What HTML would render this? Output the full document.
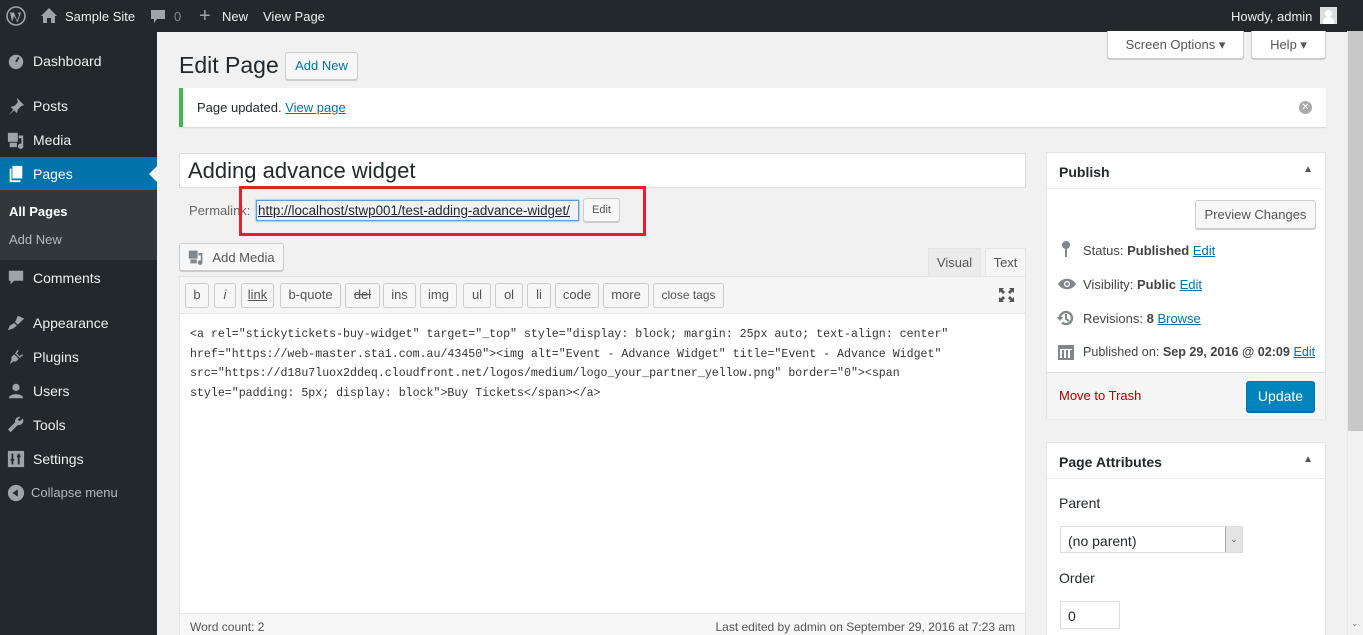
<!DOCTYPE html>
<html style="overflow:hidden;height:635px"><head><meta charset="utf-8"><style>
*{box-sizing:border-box;margin:0;padding:0}
body{width:1363px;height:635px;overflow:hidden;background:#f1f1f1;font-family:"Liberation Sans",sans-serif;font-size:13px;color:#23282d;position:relative}
.a{position:absolute}
#bar{left:0;top:0;width:1363px;height:32px;background:#23282d;color:#eee;font-size:13px}
#bar span{position:absolute;top:9px}
#side{left:0;top:32px;width:157px;height:603px;background:#23282d}
.mi{position:absolute;left:33px;color:#eee;font-size:14px}
.ic{position:absolute;left:7px;width:18px;height:18px;fill:#9ea3a8}
.btn{position:absolute;background:#f7f7f7;border:1px solid #ccc;border-radius:3px;box-shadow:0 1px 0 #ccc;color:#555;text-align:center}
.tb{position:absolute;top:283px;height:25px;background:#f7f7f7;border:1px solid #ccc;border-radius:3px;color:#555;font-size:13px;line-height:22px;text-align:center}
.box{position:absolute;background:#fff;border:1px solid #e5e5e5;box-shadow:0 1px 1px rgba(0,0,0,.04)}
a{color:#0073aa}
.pl{position:absolute;left:36px;font-size:13px;color:#444}
</style></head><body>
<div id="bar" class="a">
<svg class="a" style="left:6px;top:6px" width="20" height="20" viewBox="0 0 20 20"><circle cx="10" cy="10" r="9" fill="none" stroke="#9ea3a8" stroke-width="1.6"/><path d="M4 6.5h4l3 8 2-5-1-3h3l-3.5 10L8 10l-2 6z" fill="#9ea3a8"/></svg>
<svg class="a" style="left:41px;top:8px" width="16" height="15" viewBox="0 0 16 15"><path d="M8 0 0 8h2v7h4v-5h4v5h4V8h2z" fill="#9ea3a8"/></svg>
<span style="left:65px">Sample Site</span>
<svg class="a" style="left:150px;top:9px" width="16" height="16" viewBox="0 0 16 16"><path d="M1 1h14v9H7l-3 4v-4H1z" fill="#9ea3a8"/></svg>
<span style="left:174px;color:#888">0</span>
<span style="left:199px;top:5px;font-size:20px;color:#9ea3a8">+</span>
<span style="left:222px">New</span>
<span style="left:263px">View Page</span>
<span style="left:1231px">Howdy, admin</span>
<div class="a" style="left:1320px;top:7px;width:17px;height:17px;background:#ddd"><div class="a" style="left:5px;top:3px;width:7px;height:7px;border-radius:50%;background:#fff"></div><div class="a" style="left:3px;top:10px;width:11px;height:7px;border-radius:5px 5px 0 0;background:#fff"></div></div>
</div>
<div id="side" class="a">
<svg class="ic" style="top:20px" viewBox="0 0 20 20"><circle cx="10" cy="11" r="8" fill="#9ea3a8"/><path d="M10 11l3-5" stroke="#23282d" stroke-width="2"/></svg><span class="mi" style="top:21px">Dashboard</span>
<svg class="ic" style="top:65px" viewBox="0 0 20 20"><path d="M11 1l8 8-3 1-4 4-1 4-3-3-6 5 5-6-3-3 4-1 4-4z" fill="#9ea3a8"/></svg><span class="mi" style="top:66px">Posts</span>
<svg class="ic" style="top:99px" viewBox="0 0 20 20"><rect x="1" y="2" width="11" height="10" fill="#9ea3a8"/><path d="M13 5h5v11a3 3 0 1 1-2-2V8h-3z" fill="#9ea3a8"/><rect x="3" y="13" width="8" height="5" fill="#9ea3a8"/></svg><span class="mi" style="top:100px">Media</span>
<div class="a" style="left:0;top:125px;width:157px;height:33px;background:#0073aa"></div>
<div class="a" style="left:149px;top:134px;border:8px solid transparent;border-right-color:#f1f1f1;border-left:0"></div>
<svg class="ic" style="top:133px;fill:#fff" viewBox="0 0 20 20"><path d="M6 1h11v14H6z M3 4h2v13h10v2H3z"/></svg><span class="mi" style="top:134px;color:#fff">Pages</span>
<div class="a" style="left:0;top:158px;width:157px;height:70px;background:#32373c"></div>
<span class="a" style="left:9px;top:172px;color:#fff;font-weight:bold;font-size:13px">All Pages</span>
<span class="a" style="left:9px;top:200px;color:#b4b9be;font-size:13px">Add New</span>
<svg class="ic" style="top:237px" viewBox="0 0 20 20"><path d="M2 2h16v11H8l-4 4v-4H2z"/></svg><span class="mi" style="top:238px">Comments</span>
<svg class="ic" style="top:282px" viewBox="0 0 20 20"><path d="M12 2l7 3-7 7-3-3zM8 10l3 3-4 3-6 2 2-5z"/></svg><span class="mi" style="top:283px">Appearance</span>
<svg class="ic" style="top:316px" viewBox="0 0 20 20"><path d="M12 2l-3 4 5 5 4-3-1-1-3 2-3-3 2-3zM8 7l5 5-3 3-3 0-4 3 2-5 0-3z"/></svg><span class="mi" style="top:317px">Plugins</span>
<svg class="ic" style="top:350px" viewBox="0 0 20 20"><circle cx="10" cy="6" r="4"/><path d="M2 18c0-6 16-6 16 0z"/></svg><span class="mi" style="top:351px">Users</span>
<svg class="ic" style="top:384px" viewBox="0 0 20 20"><path d="M17 3l-3 3-2-2 3-3a5 5 0 0 0-6 6L1 15l3 3 8-8a5 5 0 0 0 6-6z"/></svg><span class="mi" style="top:385px">Tools</span>
<svg class="ic" style="top:418px" viewBox="0 0 20 20"><rect x="1" y="1" width="18" height="18"/><path d="M6 4v12M13 4v12M4 11h4M11 7h4" stroke="#23282d" stroke-width="2"/></svg><span class="mi" style="top:419px">Settings</span>
<svg class="ic" style="top:452px" viewBox="0 0 20 20"><circle cx="10" cy="10" r="9"/><path d="M12 6v8l-6-4z" fill="#23282d"/></svg><span class="mi" style="top:453px;left:31px;color:#b4b9be;font-size:13px">Collapse menu</span>
</div>

<div class="btn" style="left:1107px;top:31px;width:137px;height:28px;border-top:0;border-radius:0 0 3px 3px;background:#fff;line-height:28px;font-size:13px">Screen Options ▾</div>
<div class="btn" style="left:1251px;top:31px;width:75px;height:28px;border-top:0;border-radius:0 0 3px 3px;background:#fff;line-height:28px;font-size:13px">Help ▾</div>

<div class="a" style="left:179px;top:52px;font-size:23px;color:#23282d">Edit Page</div>
<div class="btn" style="left:285px;top:52px;width:73px;height:28px;line-height:26px;color:#0073aa;font-size:13px">Add New</div>

<div class="a" style="left:179px;top:88px;width:1147px;height:39px;background:#fff;border-left:4px solid #46b450;box-shadow:0 1px 1px rgba(0,0,0,.1)"><span class="a" style="left:14px;top:12px">Page updated. <a href="#">View page</a></span>
<div class="a" style="right:14px;top:13px;width:13px;height:13px;border-radius:50%;background:#aaa;color:#fff;font-size:10px;line-height:13px;text-align:center">✕</div></div>

<div class="a" style="left:179px;top:153px;width:847px;height:35px;background:#fff;border:1px solid #ddd;font-size:22px;padding:4px 8px">Adding advance widget</div>
<span class="a" style="left:189px;top:203px;color:#666">Permalink:</span>
<div class="a" style="left:256px;top:200px;width:323px;height:21px;border:1px solid #5b9dd9;box-shadow:0 0 2px rgba(30,140,190,.8);overflow:hidden"><span class="a" style="left:1px;top:2px;font-size:13.4px;text-decoration:underline;white-space:nowrap;color:#23282d">http://localhost/stwp001/test-adding-advance-widget/</span></div>
<div class="btn" style="left:583px;top:198px;width:37px;height:24px;line-height:22px;font-size:11px;color:#555">Edit</div>
<div class="a" style="left:239px;top:186px;width:407px;height:50px;border:3px solid #e2212a"></div>

<div class="btn" style="left:179px;top:243px;width:105px;height:28px;line-height:27px;font-size:13px;padding-left:24px">Add Media
<svg class="a" style="left:8px;top:5px" width="16" height="16" viewBox="0 0 20 20"><rect x="1" y="2" width="11" height="10" fill="#82878c"/><path d="M13 5h5v11a3 3 0 1 1-2-2V8h-3z" fill="#82878c"/><rect x="3" y="13" width="8" height="5" fill="#82878c"/></svg></div>

<div class="a" style="left:928px;top:248px;width:53px;height:29px;background:#ebebeb;border:1px solid #e5e5e5;color:#555;text-align:center;line-height:28px">Visual</div>
<div class="a" style="left:985px;top:248px;width:41px;height:29px;background:#f5f5f5;border:1px solid #e5e5e5;border-bottom:0;color:#555;text-align:center;line-height:28px">Text</div>

<div class="a" style="left:179px;top:276px;width:847px;height:359px;background:#fff;border:1px solid #e5e5e5;border-bottom:0"></div>
<div class="a" style="left:180px;top:277px;width:845px;height:37px;background:#f5f5f5;border-bottom:1px solid #e5e5e5"></div>
<div class="tb" style="left:185px;width:24px">b</div>
<div class="tb" style="left:214px;width:22px;font-style:italic">i</div>
<div class="tb" style="left:241px;width:33px;text-decoration:underline">link</div>
<div class="tb" style="left:280px;width:61px">b-quote</div>
<div class="tb" style="left:345px;width:35px;text-decoration:line-through">del</div>
<div class="tb" style="left:383px;width:33px">ins</div>
<div class="tb" style="left:420px;width:37px">img</div>
<div class="tb" style="left:463px;width:28px">ul</div>
<div class="tb" style="left:495px;width:28px">ol</div>
<div class="tb" style="left:527px;width:24px">li</div>
<div class="tb" style="left:555px;width:44px">code</div>
<div class="tb" style="left:603px;width:46px">more</div>
<div class="tb" style="left:653px;width:71px;font-size:12px">close tags</div>
<svg class="a" style="left:998px;top:287px" width="17" height="16" viewBox="0 0 17 16"><path d="M1 1h5L4.5 2.5 7 5 5 7 2.5 4.5 1 6zM16 1h-5l1.5 1.5L10 5l2 2 2.5-2.5L16 6zM1 15h5l-1.5-1.5L7 11 5 9l-2.5 2.5L1 10zM16 15h-5l1.5-1.5L10 11l2-2 2.5 2.5L16 10z" fill="#555"/></svg>
<div class="a" style="left:190px;top:325px;font-family:'Liberation Mono',monospace;font-size:11.6px;line-height:19.7px;color:#333;white-space:pre">&lt;a rel="stickytickets-buy-widget" target="_top" style="display: block; margin: 25px auto; text-align: center"
href="https://web-master.sta1.com.au/43450"&gt;&lt;img alt="Event - Advance Widget" title="Event - Advance Widget"
src="https://d18u7luox2ddeq.cloudfront.net/logos/medium/logo_your_partner_yellow.png" border="0"&gt;&lt;span
style="padding: 5px; display: block"&gt;Buy Tickets&lt;/span&gt;&lt;/a&gt;</div>
<div class="a" style="left:180px;top:613px;width:845px;height:22px;background:#f7f7f7;border-top:1px solid #e5e5e5;font-size:12px;color:#555"><span class="a" style="left:10px;top:6px">Word count: 2</span><span class="a" style="right:10px;top:6px">Last edited by admin on September 29, 2016 at 7:23 am</span></div>

<div class="box" style="left:1046px;top:152px;width:280px;height:267px">
<div class="a" style="left:0;top:0;width:278px;height:36px;border-bottom:1px solid #eee"><span class="a" style="left:12px;top:11px;font-weight:bold;font-size:14px">Publish</span><span class="a" style="right:12px;top:11px;font-size:10px;color:#555">▲</span></div>
<div class="btn" style="left:148px;top:47px;width:121px;height:29px;line-height:27px;font-size:13px">Preview Changes</div>
<svg class="a" style="left:12px;top:87px" width="14" height="18" viewBox="0 0 14 18"><circle cx="7" cy="5" r="4" fill="#82878c"/><rect x="6" y="8" width="2" height="9" fill="#82878c"/></svg>
<span class="pl" style="top:90px">Status: <b>Published</b> <a href="#">Edit</a></span>
<svg class="a" style="left:10px;top:124px" width="20" height="14" viewBox="0 0 20 14"><path d="M1 7c4-7 14-7 18 0-4 7-14 7-18 0z" fill="#82878c"/><circle cx="10" cy="7" r="3" fill="#fff"/><circle cx="10" cy="7" r="1.8" fill="#82878c"/></svg>
<span class="pl" style="top:124px">Visibility: <b>Public</b> <a href="#">Edit</a></span>
<svg class="a" style="left:10px;top:156px" width="18" height="18" viewBox="0 0 18 18"><path d="M3 9a6 6 0 1 1 2 4.5" fill="none" stroke="#82878c" stroke-width="2.4"/><path d="M0 8h6L3 12z" fill="#82878c"/><path d="M9 5v5l3 2" fill="none" stroke="#82878c" stroke-width="2"/></svg>
<span class="pl" style="top:158px">Revisions: <b>8</b> <a href="#">Browse</a></span>
<svg class="a" style="left:11px;top:190px" width="16" height="17" viewBox="0 0 16 17"><rect x="0" y="2" width="16" height="15" fill="#82878c"/><g fill="#fff"><rect x="2" y="6" width="2" height="9"/><rect x="6" y="6" width="2" height="9"/><rect x="10" y="6" width="2" height="9"/><rect x="2" y="6" width="12" height="1"/></g></svg>
<span class="pl" style="top:192px;font-size:12.6px">Published on: <b>Sep 29, 2016 @ 02:09</b> <a href="#">Edit</a></span>
<div class="a" style="left:0;top:219px;width:278px;height:47px;background:#f5f5f5;border-top:1px solid #ddd"><a class="a" style="left:12px;top:15px;color:#a00;text-decoration:none">Move to Trash</a>
<div class="a" style="left:199px;top:8px;width:69px;height:31px;background:#0085ba;border:1px solid #0073aa;border-radius:3px;box-shadow:0 1px 0 #006799;color:#fff;text-align:center;line-height:29px;font-size:14px">Update</div></div>
</div>

<div class="box" style="left:1046px;top:442px;width:280px;height:193px;border-bottom:0">
<div class="a" style="left:0;top:0;width:278px;height:36px;border-bottom:1px solid #eee"><span class="a" style="left:12px;top:11px;font-weight:bold;font-size:14px">Page Attributes</span><span class="a" style="right:12px;top:11px;font-size:10px;color:#555">▲</span></div>
<span class="a" style="left:12px;top:52px;font-size:14px">Parent</span>
<div class="a" style="left:13px;top:83px;width:183px;height:27px;border:1px solid #ddd;background:#fff"><span class="a" style="left:7px;top:6px;font-size:14px">(no parent)</span><div class="a" style="right:0;top:0;width:17px;height:25px;background:#e5e5e5;border-left:1px solid #aaa;font-size:9px;text-align:center;line-height:25px;color:#555">⌄</div></div>
<span class="a" style="left:12px;top:127px;font-size:14px">Order</span>
<div class="a" style="left:13px;top:158px;width:60px;height:28px;border:1px solid #ddd;background:#fff"><span class="a" style="left:7px;top:6px;font-size:14px">0</span></div>
</div>

<div class="a" style="left:1347px;top:31px;width:16px;height:604px;background:#f1f1f1;border-left:1px solid #e8e8e8"></div>
<div class="a" style="left:1348px;top:31px;width:15px;height:400px;background:#c8c8c8"></div>
<span class="a" style="left:1351px;top:618px;font-size:9px;color:#777">⌄</span>
</body></html>
